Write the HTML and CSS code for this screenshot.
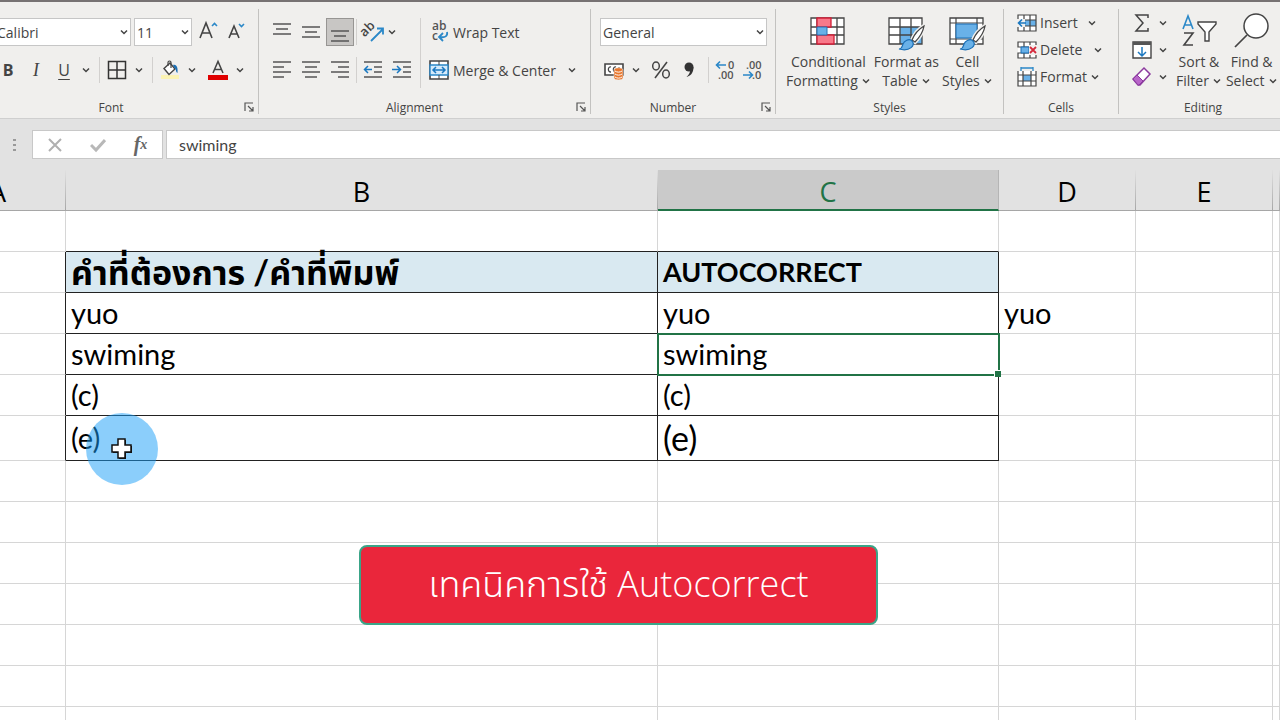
FILE: index.html
```html
<!DOCTYPE html>
<html lang="th">
<head>
<meta charset="UTF-8">
<meta name="viewport" content="width=device-width, initial-scale=1.0">
<title>Autocorrect</title>
<link rel="stylesheet" href="styles.css">
</head>
<body>
<svg class="sprites" aria-hidden="true">
    <symbol id="chevron" viewBox="0 0 10 10"><path d="M2 3.5l3 3 3-3" fill="none" stroke="#444" stroke-width="1.5"/></symbol>
    <symbol id="launcher" viewBox="0 0 10 10"><path d="M1 9V1h8M4 4l5 5M9 5v4H5" fill="none" stroke="#555" stroke-width="1.2"/></symbol>
    <symbol id="brush" viewBox="0 0 28 28"><path d="M27 2c-5 3-10 9-12 14l3 2c4-4 8-10 9-16z" fill="#fff" stroke="#f0efed" stroke-width="4"/><path d="M27 2c-5 3-10 9-12 14l3 2c4-4 8-10 9-16z" fill="#fff" stroke="#444" stroke-width="1.3"/><path d="M2 25c3 0 3-2 4-5s6-6 9-3c4 4-2 11-13 8z" fill="#69b1e8" stroke="#1b6fb5" stroke-width="1.2"/></symbol>
</svg>

<header class="ribbon">
    <section class="group font-group">
        <div class="tools">
            <div class="row">
                <label class="combo font-name"><select aria-label="Font"><option>Calibri</option></select><svg class="chev"><use href="#chevron"/></svg></label>
                <label class="combo font-size"><select aria-label="Font size"><option>11</option></select><svg class="chev"><use href="#chevron"/></svg></label>
                <button class="tool" aria-label="Increase font size"><svg class="icon" viewBox="0 0 20 20"><path d="M1 16L7 1l6 15M3 11h8" fill="none" stroke="#444" stroke-width="1.6"/><path d="M13 4l2.500-2.500L18 4" fill="none" stroke="#2b88c8" stroke-width="1.600"/></svg></button>
                <button class="tool" aria-label="Decrease font size"><svg class="icon" viewBox="0 0 20 20"><path d="M2 16L7 4l5 12M4 12h6" fill="none" stroke="#444" stroke-width="1.600"/><path d="M12 2l2.500 2.500L17 2" fill="none" stroke="#2b88c8" stroke-width="1.600"/></svg></button>
            </div>
            <div class="row">
                <button class="tool letter bold">B</button>
                <button class="tool letter italic">I</button>
                <button class="tool letter underline">U</button>
                <button class="drop" aria-label="Underline style"><svg class="chev"><use href="#chevron"/></svg></button>
                <i class="sep"></i>
                <button class="tool" aria-label="Borders"><svg class="icon" viewBox="0 0 20 20"><path d="M1.500 1.500h17v17h-17zM10 1.500v17M1.500 10h17" fill="none" stroke="#333" stroke-width="1.500"/></svg></button>
                <button class="drop" aria-label="Border style"><svg class="chev"><use href="#chevron"/></svg></button>
                <i class="sep"></i>
                <button class="tool" aria-label="Fill color"><svg class="icon" viewBox="0 0 20 20"><path d="M1 15h18v4H1z" fill="#fbf3b4"/><path d="M4 8.500L10 3l5 6-6 5.500z" fill="#fff" stroke="#444" stroke-width="1.400"/><path d="M8 6V2.500c0-2 3-2 3 0V8" fill="none" stroke="#444" stroke-width="1.200"/><path d="M13 5c4-1 5 3 4.500 8-2-1-1-4-3-5z" fill="#1b6fb5"/></svg></button>
                <button class="drop" aria-label="Fill palette"><svg class="chev"><use href="#chevron"/></svg></button>
                <button class="tool color" aria-label="Font color"><svg class="icon" viewBox="0 0 20 20"><path d="M5 13l5-11.500L15 13M7 9.500h6" fill="none" stroke="#444" stroke-width="1.500"/><path d="M0 15h20v5H0z" fill="#e00000"/></svg></button>
                <button class="drop" aria-label="Font palette"><svg class="chev"><use href="#chevron"/></svg></button>
            </div>
        </div>
        <footer>Font<svg class="launch"><use href="#launcher"/></svg></footer>
    </section>

    <section class="group align-group">
        <div class="tools split">
            <div class="stack">
                <div class="row spaced">
                    <button class="tool" aria-label="Top align"><svg class="icon lines" viewBox="0 0 20 20"><path d="M1 2h18M4 7h12M1 12h18"/></svg></button>
                    <button class="tool" aria-label="Middle align"><svg class="icon lines" viewBox="0 0 20 20"><path d="M1 5h18M4 10h12M1 15h18"/></svg></button>
                    <button class="tool selected" aria-label="Bottom align"><svg class="icon lines" viewBox="0 0 20 20"><path d="M1 9h18M4 14h12M1 19h18"/></svg></button>
                    <i class="sep"></i>
                    <button class="tool orient" aria-label="Orientation"><svg class="icon" viewBox="0 0 20 20"><text x="1" y="14" transform="rotate(-45 3 14)" font-size="13" font-weight="600" fill="#444">ab</text><path d="M8 19L20 7M14 6.500h6v6" fill="none" stroke="#2b88c8" stroke-width="1.800"/></svg><svg class="chev"><use href="#chevron"/></svg></button>
                </div>
                <div class="row spaced">
                    <button class="tool" aria-label="Align left"><svg class="icon lines" viewBox="0 0 20 20"><path d="M1 2h18M1 7h11M1 12h18M1 17h11"/></svg></button>
                    <button class="tool" aria-label="Center"><svg class="icon lines" viewBox="0 0 20 20"><path d="M1 2h18M4 7h12M1 12h18M4 17h12"/></svg></button>
                    <button class="tool" aria-label="Align right"><svg class="icon lines" viewBox="0 0 20 20"><path d="M1 2h18M8 7h11M1 12h18M8 17h11"/></svg></button>
                    <i class="sep"></i>
                    <button class="tool" aria-label="Decrease indent"><svg class="icon lines" viewBox="0 0 20 20"><path d="M1 2h18M11 7h8M11 12h8M1 17h18"/><path class="blue" d="M9 9.500H2M5 6L1.500 9.500 5 13"/></svg></button>
                    <button class="tool" aria-label="Increase indent"><svg class="icon lines" viewBox="0 0 20 20"><path d="M1 2h18M11 7h8M11 12h8M1 17h18"/><path class="blue" d="M0 9.500h8M5 6l3.500 3.500L5 13"/></svg></button>
                </div>
            </div>
            <i class="tall-sep"></i>
            <div class="stack">
                <button class="wide"><svg class="icon" viewBox="0 0 20 20"><text x="3" y="8" font-size="12" font-weight="600" fill="#555">ab</text><text x="3" y="18" font-size="12" font-weight="600" fill="#555">c</text><path d="M18 10c1 4-2 6-7 5M14 11l-4 4 4 4" fill="none" stroke="#2b88c8" stroke-width="1.800"/></svg>Wrap Text</button>
                <button class="wide merge"><svg class="icon" viewBox="0 0 20 20"><path d="M1 1h18v18H1z" fill="#fff" stroke="#444" stroke-width="1.600"/><path d="M1 5h18v10H1z" fill="#d5eafa" stroke="#2b88c8" stroke-width="1.400"/><path d="M10 1v4M10 15v4" stroke="#444"/><path d="M4 10h12M7 7l-3 3 3 3M13 7l3 3-3 3" fill="none" stroke="#1b78c0" stroke-width="1.500"/></svg>Merge &amp; Center<svg class="chev"><use href="#chevron"/></svg></button>
            </div>
        </div>
        <footer>Alignment<svg class="launch"><use href="#launcher"/></svg></footer>
    </section>

    <section class="group number-group">
        <div class="tools">
            <div class="row">
                <label class="combo number-format"><select aria-label="Number format"><option>General</option></select><svg class="chev"><use href="#chevron"/></svg></label>
            </div>
            <div class="row">
                <button class="tool" aria-label="Accounting format"><svg class="icon" viewBox="0 0 20 20"><path d="M1 4h18v11H1z" fill="#fff" stroke="#444" stroke-width="1.600"/><path d="M7 7c-3-1-4 5 0 5M12 7c-3-1-4 5 0 5M15 9V7" fill="none" stroke="#444" stroke-width="1.300"/><path d="M10 10c0-3 9-3 9 0v8c0 2.500-9 2.500-9 0z" fill="#e8762c" stroke="#f0efed" stroke-width=".6"/><path d="M11 11c2 1.500 5 1.500 7 0M11 14c2 1.500 5 1.500 7 0M11 17c2 1.500 5 1.500 7 0" fill="none" stroke="#fff"/></svg></button>
                <button class="drop" aria-label="Currency"><svg class="chev"><use href="#chevron"/></svg></button>
                <button class="tool percent" aria-label="Percent style"><svg class="icon" viewBox="0 0 20 20"><path d="M16 2L4 18" stroke="#444" stroke-width="1.500"/><ellipse cx="5" cy="6" rx="3.300" ry="4" fill="none" stroke="#444" stroke-width="1.500"/><ellipse cx="15" cy="14" rx="3.300" ry="4" fill="none" stroke="#444" stroke-width="1.500"/></svg></button>
                <button class="tool" aria-label="Comma style"><svg class="icon" viewBox="0 0 20 20"><circle cx="10" cy="7" r="4.500" fill="#333"/><path d="M14.500 7c0 6-3 9-7 10 3-3 4-5 3.500-8" fill="#333"/></svg></button>
                <i class="sep"></i>
                <button class="tool" aria-label="Increase decimal"><svg class="icon" viewBox="0 0 20 20"><text x="12" y="9" font-size="11" font-weight="600" fill="#555">0</text><text x="2" y="19" font-size="11" font-weight="600" fill="#555">.00</text><path d="M10 5H1M4 1.500L.5 5 4 8.500" fill="none" stroke="#2b88c8" stroke-width="1.600"/></svg></button>
                <button class="tool" aria-label="Decrease decimal"><svg class="icon" viewBox="0 0 20 20"><text x="2" y="9" font-size="11" font-weight="600" fill="#555">.00</text><text x="8" y="19" font-size="11" font-weight="600" fill="#555">.0</text><path d="M-1 15h9M5 11.500L8.500 15 5 18.500" fill="none" stroke="#2b88c8" stroke-width="1.600"/></svg></button>
            </div>
        </div>
        <footer>Number<svg class="launch"><use href="#launcher"/></svg></footer>
    </section>

    <section class="group styles-group">
        <div class="bigs">
            <button class="big"><svg class="pic" viewBox="0 0 36 34"><path d="M1 2h33v26H1z" fill="#fff"/><path d="M1 2h33v26H1zM7 2v26M27 2v26M1 11h33M1 19h33" fill="none" stroke="#444" stroke-width="1.300"/><path d="M7 2h14v9H7zM7 19h17v9H7z" fill="#f8798a" stroke="#d21f38" stroke-width="1.300"/><path d="M7 11h10v8H7z" fill="#69b1e8" stroke="#2672b5"/></svg><span>Conditional<br>Formatting<svg class="chev"><use href="#chevron"/></svg></span></button>
            <button class="big"><svg class="pic" viewBox="0 0 36 34"><path d="M1 2h33v26H1z" fill="#fff"/><path d="M12 11h22v17H12z" fill="#69b1e8"/><path d="M1 2h33v26H1zM12 2v26M23 2v26M1 11h33M1 19h33" fill="none" stroke="#444" stroke-width="1.300"/><use href="#brush" x="9" y="8" width="28" height="28"/></svg><span>Format as<br>Table<svg class="chev"><use href="#chevron"/></svg></span></button>
            <button class="big"><svg class="pic" viewBox="0 0 36 34"><path d="M1 2h33v26H1z" fill="#fff" stroke="#444" stroke-width="1.300"/><path d="M1 7h33M1 23h33M7 2v26M28 2v26" stroke="#444" stroke-width="1.200"/><path d="M7 8h21v14H7z" fill="#69b1e8" stroke="#1b6fb5"/><use href="#brush" x="9" y="8" width="28" height="28"/></svg><span>Cell<br>Styles<svg class="chev"><use href="#chevron"/></svg></span></button>
        </div>
        <footer>Styles</footer>
    </section>

    <section class="group cells-group">
        <div class="smalls">
            <button class="small insert"><svg class="icon" viewBox="0 0 20 20"><path d="M1 2h18v16H1z" fill="#fff"/><path d="M8 7h11v6H8z" fill="#69b1e8"/><path d="M1 2h18v16H1zM1 7h18M1 13h18M7 2v16M13 2v16" fill="none" stroke="#444" stroke-width="1.200"/><path d="M0 6h8v8H0z" fill="#f0efed"/><path d="M9 10H2M5 6.500L1.500 10 5 13.500" fill="none" stroke="#1b78c0" stroke-width="1.600"/></svg><span>Insert</span><svg class="chev"><use href="#chevron"/></svg></button>
            <button class="small delete"><svg class="icon" viewBox="0 0 20 20"><path d="M1 2h18v16H1z" fill="#fff"/><path d="M1 2h18v5H1zM1 13h18v5H1zM7 2v5M13 2v5M7 13v5M13 13v5" fill="none" stroke="#444" stroke-width="1.200"/><path d="M4 7h8v6H4z" fill="#69b1e8" stroke="#1b6fb5"/><path d="M12 5h8v10h-8z" fill="#f0efed"/><path d="M13 7l6 6M19 7l-6 6" stroke="#d5293b" stroke-width="1.800"/></svg><span>Delete</span><svg class="chev"><use href="#chevron"/></svg></button>
            <button class="small"><svg class="icon" viewBox="0 0 20 20"><path d="M1 4h18v15H1z" fill="#fff"/><path d="M6 8h8v6H6z" fill="#69b1e8"/><path d="M1 4v15h18V4M1 8h18M1 14h18M6 4v15M14 4v15" fill="none" stroke="#444" stroke-width="1.200"/><path d="M4 1h12M4 0v4M16 0v4" stroke="#2b88c8" stroke-width="1.300"/></svg><span>Format</span><svg class="chev"><use href="#chevron"/></svg></button>
        </div>
        <footer>Cells</footer>
    </section>

    <section class="group edit-group">
        <div class="edit-tools">
            <div class="smalls">
                <button class="small" aria-label="AutoSum"><svg class="icon" viewBox="0 0 20 20"><path d="M16 5V2H4l7 8-7 8h12v-3" fill="none" stroke="#444" stroke-width="1.500"/></svg><svg class="chev"><use href="#chevron"/></svg></button>
                <button class="small" aria-label="Fill"><svg class="icon" viewBox="0 0 20 20"><path d="M1 2h18v16H1z" fill="#fff" stroke="#444" stroke-width="1.400"/><path d="M1 2h18v3H1z" fill="#555"/><path d="M10 7v9M6 12l4 4 4-4" fill="none" stroke="#1b78c0" stroke-width="1.500"/></svg><svg class="chev"><use href="#chevron"/></svg></button>
                <button class="small" aria-label="Clear"><svg class="icon" viewBox="0 0 20 20"><path d="M1 12L12 1l6 6L8 18H6z" fill="#fff" stroke="#8b3a9e" stroke-width="1.500"/><path d="M1 12l4-4 6 6-4 4H6z" fill="#b865c9" stroke="#8b3a9e"/></svg><svg class="chev"><use href="#chevron"/></svg></button>
            </div>
            <button class="big"><svg class="pic" viewBox="0 0 36 34"><path d="M2 13L7 0l5 13M4 9h6" fill="none" stroke="#2b88c8" stroke-width="1.600"/><path d="M3 17h9L3 29h9" fill="none" stroke="#444" stroke-width="1.600"/><path d="M17 6h18v2l-7 8v9h-4v-9l-7-8z" fill="#fff" stroke="#444" stroke-width="1.400"/></svg><span>Sort &amp;<br>Filter<svg class="chev"><use href="#chevron"/></svg></span></button>
            <button class="big"><svg class="pic" viewBox="0 0 36 34"><circle cx="22" cy="10" r="12" fill="#fff" stroke="#444" stroke-width="1.500"/><path d="M13 19L1 31" stroke="#444" stroke-width="1.700"/></svg><span>Find &amp;<br>Select<svg class="chev"><use href="#chevron"/></svg></span></button>
        </div>
        <footer>Editing</footer>
    </section>
</header>

<div class="formula-bar">
    <svg class="grip" viewBox="0 0 4 14"><path d="M0 1h3v2H0zM0 6h3v2H0zM0 11h3v2H0z" fill="#999"/></svg>
    <div class="formula-buttons">
        <button aria-label="Cancel"><svg viewBox="0 0 16 16"><path d="M2 2l12 12M14 2L2 14" stroke="#b0b0b0" stroke-width="2"/></svg></button>
        <button aria-label="Enter"><svg viewBox="0 0 16 16"><path d="M1 8l5 5 9-10" fill="none" stroke="#b8b8b8" stroke-width="3"/></svg></button>
        <button class="fx" aria-label="Insert function">f<small>x</small></button>
    </div>
    <input type="text" aria-label="Formula" value="swiming">
</div>

<main class="sheet">
    <table>
        <colgroup><col class="col-a"><col class="col-b"><col class="col-c"><col class="col-d"><col class="col-e"><col></colgroup>
        <thead>
            <tr><th>A</th><th>B</th><th class="current">C</th><th>D</th><th>E</th><th></th></tr>
        </thead>
        <tbody>
            <tr class="above"><td></td><td></td><td></td><td></td><td></td><td></td></tr>
            <tr class="boxed title"><td></td><td class="thai">คำที่ต้องการ /คำที่พิมพ์</td><td>AUTOCORRECT</td><td></td><td></td><td></td></tr>
            <tr class="boxed"><td></td><td>yuo</td><td>yuo</td><td>yuo</td><td></td><td></td></tr>
            <tr class="boxed"><td></td><td>swiming</td><td class="active">swiming</td><td></td><td></td><td></td></tr>
            <tr class="boxed"><td></td><td>(c)</td><td>(c)</td><td></td><td></td><td></td></tr>
            <tr class="boxed last"><td></td><td>(e)</td><td class="larger">(e)</td><td></td><td></td><td></td></tr>
            <tr><td></td><td></td><td></td><td></td><td></td><td></td></tr>
            <tr><td></td><td></td><td></td><td></td><td></td><td></td></tr>
            <tr><td></td><td></td><td></td><td></td><td></td><td></td></tr>
            <tr><td></td><td></td><td></td><td></td><td></td><td></td></tr>
            <tr><td></td><td></td><td></td><td></td><td></td><td></td></tr>
            <tr><td></td><td></td><td></td><td></td><td></td><td></td></tr>
            <tr><td></td><td></td><td></td><td></td><td></td><td></td></tr>
        </tbody>
    </table>
    <div class="pointer"><svg viewBox="0 0 22 22"><path d="M8 2h7v6h6v7h-6v6H8v-6H2V8h6z" fill="#111"/><path d="M7 1h7v6h6v7h-6v6H7v-6H1V7h6z" fill="#fff" stroke="#111" stroke-width="1.500"/></svg></div>
    <div class="banner">เทคนิคการใช้ Autocorrect</div>
</main>
</body>
</html>
```
FILE: styles.css
```css
* {
    box-sizing: border-box;
}
body {
    margin: 0;
    height: 100vh;
    display: flex;
    flex-direction: column;
    overflow: hidden;
    background-color: #e2e2e2;
    font-family: "Open Sans", "Noto Sans", sans-serif;
    font-size: 14px;
    color: #444;
}
button, select, input {
    font: inherit;
    color: inherit;
}
button {
    display: flex;
    align-items: center;
    justify-content: center;
    padding: 0;
    border: none;
    background: none;
    white-space: nowrap;
}
.sprites {
    position: absolute;
    width: 0;
    height: 0;
}

/* Ribbon */
.ribbon {
    display: flex;
    height: 119px;
    flex-shrink: 0;
    padding-top: 7px;
    background-color: #f0efed;
    border-top: 2px solid #777273;
    border-bottom: 1px solid #cfcfcf;
    overflow: hidden;
}
.group {
    display: flex;
    flex-direction: column;
    flex-shrink: 0;
    height: 105px;
    border-right: 1px solid #c3c2c0;
}
.font-group {
    width: 265px;
    margin-left: -6px;
}
.align-group {
    width: 332px;
}
.number-group {
    width: 185px;
}
.styles-group {
    width: 228px;
}
.cells-group {
    width: 115px;
}
.edit-group {
    flex: 1 0 168px;
    border-right: none;
}
.group footer {
    position: relative;
    margin-top: auto;
    text-align: center;
    font-size: 12px;
    line-height: 12px;
    padding-right: 20px;
}
.font-group footer {
    padding-right: 30px;
}
.styles-group footer, .cells-group footer, .edit-group footer {
    padding-right: 0;
}
.launch {
    position: absolute;
    right: 4px;
    top: 0;
    width: 10px;
    height: 10px;
}
.icon {
    width: 20px;
    height: 20px;
    flex-shrink: 0;
    overflow: visible;
}
.chev {
    width: 10px;
    height: 10px;
    flex-shrink: 0;
}
.lines path {
    fill: none;
    stroke: #555;
    stroke-width: 1.5;
}
.lines .blue {
    stroke: #1b78c0;
}
.tools {
    display: flex;
    flex-direction: column;
    gap: 10px;
    padding-top: 9px;
}
.row {
    display: flex;
    height: 28px;
    align-items: center;
}
.tool {
    width: 28px;
    height: 28px;
}
.drop {
    width: 16px;
    height: 28px;
}
.sep {
    width: 1px;
    height: 26px;
    margin: 0 3px 0 5px;
    background-color: #d2d0ce;
}
.combo {
    position: relative;
    height: 28px;
    margin-right: 3px;
}
.combo select {
    width: 100%;
    height: 28px;
    padding: 0 2px;
    appearance: none;
    background-color: #fff;
    border: 1px solid #c6c6c6;
    border-radius: 0;
}
.combo .chev {
    position: absolute;
    right: 2px;
    top: 9px;
}
.font-name {
    width: 137px;
}
.font-size {
    width: 58px;
}
.letter {
    font-size: 16px;
}
.bold {
    font-weight: bold;
}
.italic {
    font-family: "Liberation Serif", serif;
    font-style: italic;
    font-size: 18px;
}
.underline {
    text-decoration: underline;
    text-underline-offset: 3px;
}
.color {
    margin-left: 4px;
}

.split {
    flex-direction: row;
    gap: 0;
    padding-left: 9px;
}
.stack {
    display: flex;
    flex-direction: column;
    gap: 10px;
}
.spaced {
    gap: 1px;
}
.spaced .sep {
    margin: 0 1px;
}
.selected {
    background-color: #c8c6c4;
    border: 1px solid #979593;
}
.orient {
    width: 50px;
    gap: 4px;
    justify-content: flex-start;
    padding-left: 4px;
}
.tall-sep {
    width: 1px;
    height: 70px;
    margin: 0 8px 0 4px;
    background-color: #d2d0ce;
}
.wide {
    height: 28px;
    gap: 4px;
    justify-content: flex-start;
}
.merge .chev {
    margin-left: 7px;
}

.number-group .tools {
    padding-left: 9px;
}
.number-format {
    width: 167px;
}
.percent {
    margin-left: 3px;
}

.bigs, .edit-tools {
    display: flex;
    padding-top: 7px;
}
.bigs {
    padding-left: 10px;
    gap: 3px;
}
.big {
    flex-direction: column;
    justify-content: flex-start;
    gap: 2px;
    line-height: 19px;
    padding: 0;
}
.big .chev {
    margin-left: 3px;
}
.pic {
    width: 36px;
    height: 34px;
    overflow: visible;
}
.smalls {
    display: flex;
    flex-direction: column;
}
.small {
    height: 27px;
    gap: 3px;
    justify-content: flex-start;
}
.cells-group .smalls {
    padding-left: 13px;
}
.insert .chev {
    margin-left: 6px;
}
.delete .chev {
    margin-left: 8px;
}
.edit-tools {
    gap: 4px;
    padding: 0 0 0 13px;
}
.edit-tools .smalls {
    margin-right: 4px;
}
.edit-tools .small {
    gap: 6px;
}
.edit-tools .big {
    padding-top: 7px;
}

/* Formula bar */
.formula-bar {
    display: flex;
    flex-shrink: 0;
    align-items: center;
    height: 51px;
    padding-left: 13px;
}
.grip {
    width: 4px;
    height: 14px;
    margin-right: 15px;
}
.formula-buttons {
    display: flex;
    width: 131px;
    height: 29px;
    margin-right: 3px;
    background-color: #fff;
    border: 1px solid #c8c8c8;
}
.formula-buttons button {
    flex: 1;
}
.formula-buttons svg {
    width: 16px;
    height: 16px;
}
.fx {
    font-family: "Liberation Serif", serif;
    font-style: italic;
    font-weight: bold;
    font-size: 20px;
    color: #666;
}
.fx small {
    font-size: 14px;
}
.formula-bar input {
    flex: 1;
    height: 29px;
    padding: 0 12px;
    border: 1px solid #c8c8c8;
    border-right: none;
    background-color: #fff;
    font-family: Lato, sans-serif;
    font-size: 16px;
}

/* Worksheet, column A runs off the left side */
.sheet {
    position: relative;
    flex: 1;
    overflow: hidden;
    background-color: #fff;
}
table {
    width: calc(100% + 70px);
    margin-left: -70px;
    table-layout: fixed;
    border-collapse: separate;
    border-spacing: 0;
    color: #000;
}
.col-a {
    width: 136px;
}
.col-b {
    width: 592px;
}
.col-c {
    width: 341px;
}
.col-d, .col-e {
    width: 137px;
}
th {
    height: 41px;
    padding: 3px 0 0;
    font-weight: normal;
    font-size: 27px;
    line-height: 35px;
    background-color: #e2e2e2;
    border-bottom: 1px solid #a6a6a6;
    border-right: 1px solid;
    border-image: linear-gradient(#e2e2e2, #a6a6a6) 1;
}
.current {
    background-color: #cacaca;
    color: #217346;
    border-image: none;
    border-right-color: #b5b5b5;
    border-bottom: 2px solid #217346;
}
td {
    height: 41px;
    padding: 0 5px;
    font-family: Lato, "Noto Sans Thai", sans-serif;
    font-size: 29px;
    line-height: 36px;
    border-right: 1px solid #d6d6d6;
    border-bottom: 1px solid #d6d6d6;
    white-space: nowrap;
}
.above td:nth-child(2), .above td:nth-child(3),
.boxed td:nth-child(2), .boxed td:nth-child(3) {
    border-bottom-color: #222;
}
.boxed td:nth-child(1), .boxed td:nth-child(2), .boxed td:nth-child(3) {
    border-right-color: #222;
}
.title td {
    font-weight: bold;
    font-size: 27px;
}
.title .thai {
    font-size: 34px;
}
.title td:nth-child(2), .title td:nth-child(3) {
    background-color: #d9e9f1;
}
.last td {
    height: 45px;
}
.last .larger {
    font-size: 34px;
}
.active {
    position: relative;
}
.active::before {
    content: "";
    position: absolute;
    inset: -1px -2px -2px -1px;
    border: 2px solid #217346;
}
.active::after {
    content: "";
    position: absolute;
    right: -3px;
    bottom: -3px;
    width: 6px;
    height: 6px;
    background-color: #217346;
    border: 1px solid #fff;
    border-width: 1px 0 0 1px;
}
.pointer {
    position: absolute;
    left: 86px;
    top: 243px;
    display: flex;
    align-items: center;
    justify-content: center;
    width: 72px;
    height: 72px;
    border-radius: 50%;
    background-color: rgba(24, 158, 248, 0.5);
}
.pointer svg {
    width: 22px;
    height: 22px;
}
.banner {
    position: absolute;
    left: 359px;
    top: 375px;
    width: 519px;
    height: 80px;
    border: 2px solid #3aa588;
    border-radius: 8px;
    background-color: #ea263b;
    color: #fff;
    text-align: center;
    font-family: "Open Sans", "Noto Sans Thai", sans-serif;
    font-weight: 300;
    font-size: 36px;
    line-height: 74px;
}
```
